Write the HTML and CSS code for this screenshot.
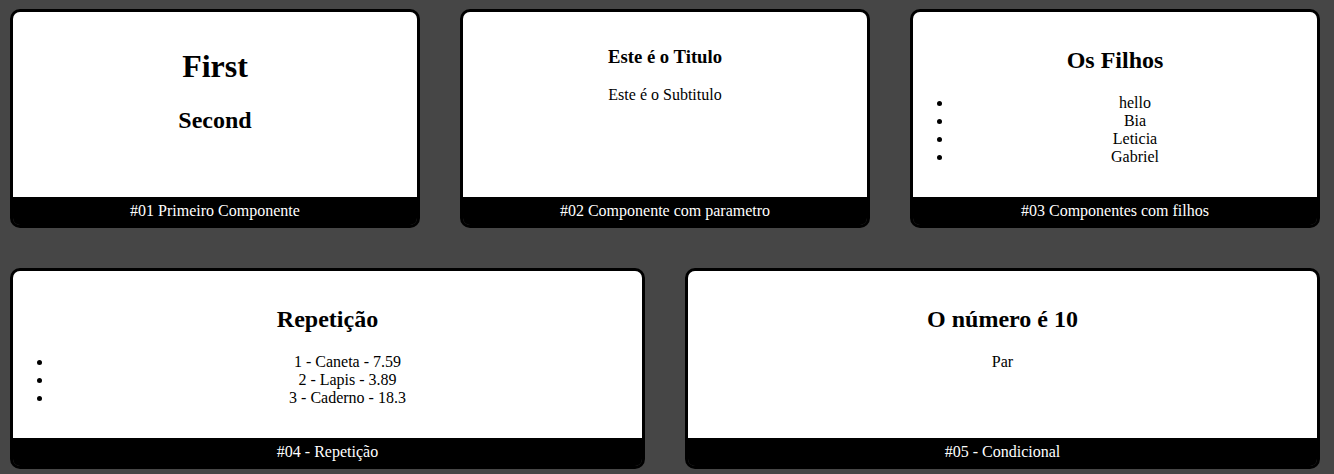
FILE: index.html
```html
<!DOCTYPE html>
<html lang="pt-BR">
<head>
<meta charset="utf-8">
<title>Componentes</title>
<link rel="stylesheet" href="styles.css">
</head>
<body>
<div class="cards">
  <div class="card">
    <div class="content">
      <h1>First</h1>
      <h2>Second</h2>
    </div>
    <div class="footer">#01 Primeiro Componente</div>
  </div>
  <div class="card">
    <div class="content">
      <h3>Este é o Titulo</h3>
      <p>Este é o Subtitulo</p>
    </div>
    <div class="footer">#02 Componente com parametro</div>
  </div>
  <div class="card">
    <div class="content">
      <h2>Os Filhos</h2>
      <ul>
        <li>hello</li>
        <li>Bia</li>
        <li>Leticia</li>
        <li>Gabriel</li>
      </ul>
    </div>
    <div class="footer">#03 Componentes com filhos</div>
  </div>
  <div class="card">
    <div class="content">
      <h2>Repetição</h2>
      <ul>
        <li>1 - Caneta - 7.59</li>
        <li>2 - Lapis - 3.89</li>
        <li>3 - Caderno - 18.3</li>
      </ul>
    </div>
    <div class="footer">#04 - Repetição</div>
  </div>
  <div class="card">
    <div class="content">
      <h2>O número é 10</h2>
      <p>Par</p>
    </div>
    <div class="footer">#05 - Condicional</div>
  </div>
</div>
</body>
</html>
```
FILE: styles.css
```css
html, body {
  margin: 0;
  background: #464646;
  font-family: "Liberation Serif", "Times New Roman", serif;
  font-size: 16px;
  color: #000;
}

.cards {
  display: flex;
  flex-wrap: wrap;
  gap: 40px;
  padding: 9px 14px 0 10px;
}

.card {
  flex: 1 1 400px;
  min-width: 400px;
  display: flex;
  flex-direction: column;
  border: 3px solid #000;
  border-radius: 10px;
}

.content {
  flex-grow: 1;
  background: #fff;
  padding: 15px 0;
  text-align: center;
  border-radius: 7px 7px 0 0;
}

.footer {
  background: #000;
  color: #fff;
  padding: 5px;
  text-align: center;
  border-radius: 0 0 7px 7px;
}
```
